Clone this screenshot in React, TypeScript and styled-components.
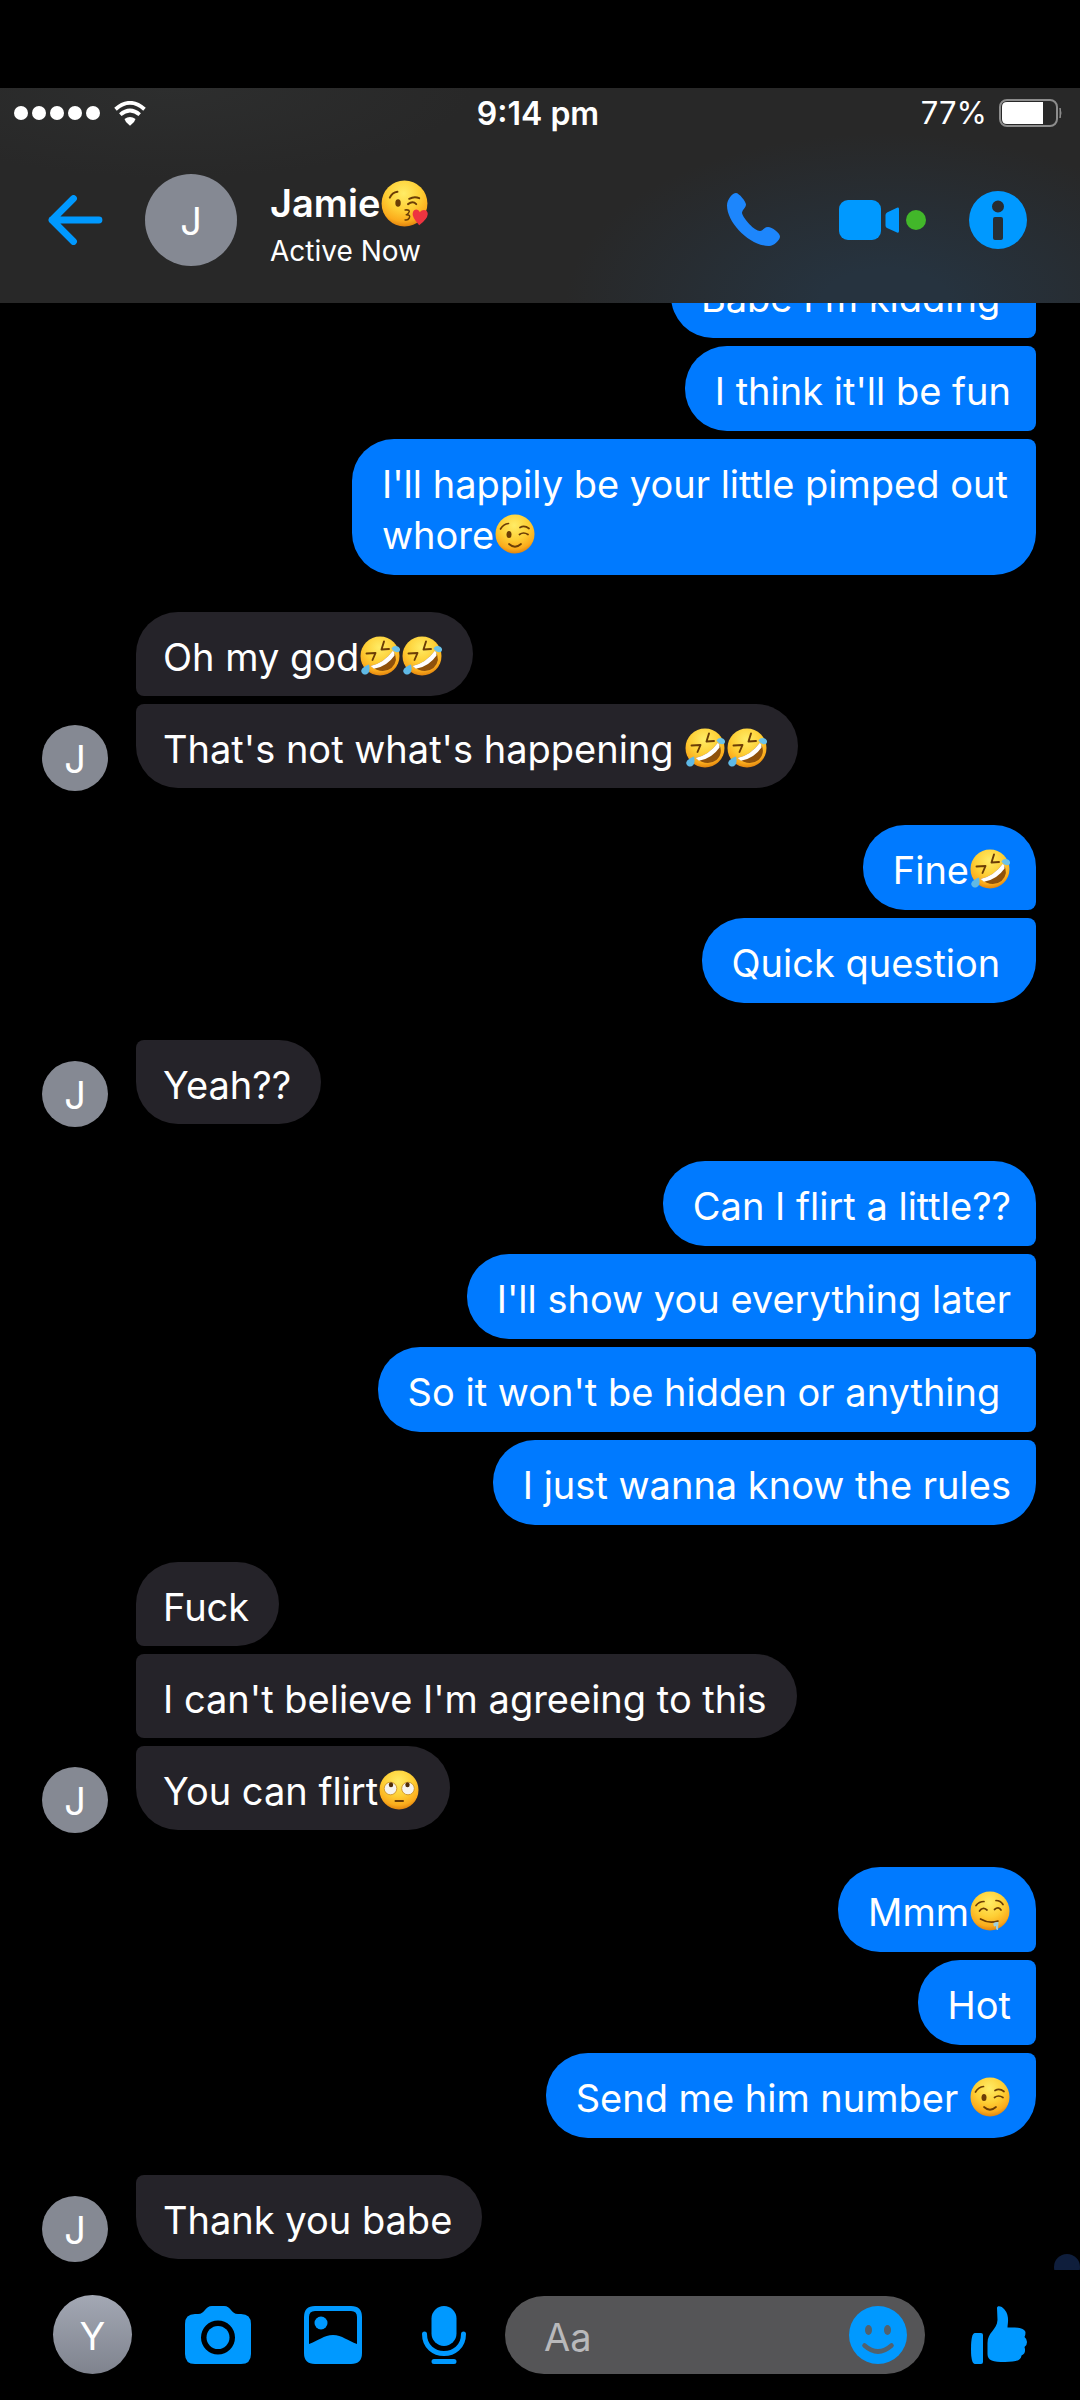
import React from "react";
import styled, { createGlobalStyle } from "styled-components";

const color = {
  accent: "#0099ff",
  sent: "#007aff",
  received: "#252329",
  bar: "#282828",
  avatar: "#858993",
  field: "#555557",
};

const GlobalStyle = createGlobalStyle`
  * { box-sizing: border-box; }
  body {
    margin: 0;
    background: #000;
    color: #fff;
    font-family: Inter, "Liberation Sans", sans-serif;
  }
`;

const Screen = styled.div`
  display: flex;
  flex-direction: column;
  height: 100vh;
  padding-top: 88px;
  background: #000;
`;

const TopBar = styled.header`
  flex: none;
  background:
    radial-gradient(ellipse 320px 170px at 82% 100%, #26333f 0%, #26333f 20%, rgba(40, 40, 40, 0) 100%),
    radial-gradient(ellipse 300px 90px at 16% 0%, #2d2e2e 0%, rgba(40, 40, 40, 0) 100%),
    ${color.bar};
`;

const StatusBar = styled.div`
  display: grid;
  grid-template-columns: 1fr auto 1fr;
  align-items: center;
  height: 50px;
  padding: 0 18px 0 14px;
  line-height: 40px;
`;

const Signal = styled.div`
  display: flex;
  align-items: center;
  gap: 4px;
`;

const SignalDot = styled.span`
  width: 14px;
  height: 14px;
  border-radius: 50%;
  background: #fff;
`;

const WifiIcon = styled.svg`
  margin-left: 10px;
`;

const Clock = styled.time`
  padding-top: 2px;
  font-size: 32px;
  font-weight: 600;
`;

const Power = styled.div`
  display: flex;
  align-items: center;
  justify-content: flex-end;
  gap: 12px;
  font-size: 31px;
`;

const ContactBar = styled.div`
  display: flex;
  align-items: center;
  padding: 30px 53px 32px 48px;
`;

const IconButton = styled.button`
  display: flex;
  flex: none;
  align-items: center;
  justify-content: center;
  padding: 0;
  border: 0;
  background: none;
  color: ${color.accent};
  cursor: pointer;
`;

const InfoButton = styled(IconButton)`
  margin-left: 43px;
`;

const Avatar = styled.span<{ $size: number; $shaded?: boolean }>`
  display: flex;
  flex: none;
  align-items: center;
  justify-content: center;
  width: ${(p) => p.$size}px;
  height: ${(p) => p.$size}px;
  padding-top: 2px;
  border-radius: 50%;
  background: ${(p) => (p.$shaded ? "linear-gradient(#a3a8b4, #7f838e)" : color.avatar)};
  font-size: 38px;
  line-height: 40px;
`;

const Contact = styled.div`
  flex: 1;
  min-width: 0;
  margin-left: 33px;
  padding-top: 11px;
`;

const ContactName = styled.h1`
  display: flex;
  align-items: center;
  height: 48px;
  margin: 0;
  font-size: 38px;
  font-weight: 600;
  white-space: nowrap;
`;

const Presence = styled.p`
  margin: 4px 0 0;
  font-size: 28px;
  line-height: 40px;
`;

const CallActions = styled.div`
  display: flex;
  align-items: center;
  gap: 59px;
`;

const VideoGroup = styled.span`
  display: flex;
  align-items: center;
  gap: 7px;
`;

const OnlineDot = styled.span`
  width: 20px;
  height: 20px;
  border-radius: 50%;
  background: #42b72a;
`;

const Thread = styled.main`
  position: relative;
  display: flex;
  flex: 1;
  min-height: 0;
`;

const Scroller = styled.div`
  display: flex;
  flex: 1;
  flex-direction: column-reverse;
  overflow-y: auto;
  scrollbar-width: none;
  padding: 0 44px 11px 42px;
`;

const Conversation = styled.div`
  display: flex;
  flex: none;
  flex-direction: column;
  gap: 37px;
`;

const ThreadClip = styled.div`
  position: absolute;
  right: 0;
  bottom: 0;
  width: 26px;
  height: 16px;
  overflow: hidden;
`;

const ScrollKnob = styled.div`
  height: 26px;
  border-radius: 50%;
  background: #0f1e3c;
`;

const Turn = styled.section<{ $mine: boolean }>`
  display: flex;
  align-items: flex-end;
  justify-content: ${(p) => (p.$mine ? "flex-end" : "flex-start")};
  gap: 28px;
  padding-left: ${(p) => (p.$mine ? 94 : 0)}px;
`;

const AvatarSlot = styled.div`
  margin-bottom: -3px;
`;

const Stack = styled.div<{ $mine: boolean }>`
  display: flex;
  flex: 1;
  flex-direction: column;
  align-items: ${(p) => (p.$mine ? "flex-end" : "flex-start")};
  gap: 8px;
`;

const Bubble = styled.p<{ $mine: boolean; $first: boolean; $last: boolean }>`
  max-width: 76%;
  margin: 0;
  padding: ${(p) => (p.$mine ? "20px 25px 14px 30px" : "20px 30px 13px 27px")};
  border-radius: ${(p) => {
    const top = p.$first ? 42 : 8;
    const bottom = p.$last ? 42 : 8;
    return p.$mine ? `42px ${top}px ${bottom}px 42px` : `${top}px 42px 42px ${bottom}px`;
  }};
  background: ${(p) => (p.$mine ? color.sent : color.received)};
  font-size: 38px;
  line-height: 51px;
`;

const EmojiSvg = styled.svg<{ $size: number }>`
  width: ${(p) => p.$size}px;
  height: ${(p) => p.$size}px;
  margin: 0 1px;
  vertical-align: -5px;
`;

const Composer = styled.form`
  display: flex;
  flex: none;
  align-items: center;
  gap: 32px;
  padding: 25px 53px 26px;
`;

const Tools = styled.div`
  display: flex;
  align-items: center;
  gap: 53px;
`;

const Field = styled.div`
  display: flex;
  flex: 1;
  align-items: center;
  min-width: 0;
  height: 78px;
  margin-right: 14px;
  padding: 0 18px 0 39px;
  border-radius: 39px;
  background: ${color.field};
`;

const FieldInput = styled.input`
  flex: 1;
  min-width: 0;
  height: 78px;
  padding: 4px 0 0;
  border: 0;
  outline: 0;
  background: none;
  color: #fff;
  font-family: inherit;
  font-size: 38px;

  &::placeholder {
    color: #b9b9bb;
    opacity: 1;
  }
`;

type EmojiKind = "kiss" | "wink" | "rofl" | "roll" | "drool";

const emojiLabel: Record<EmojiKind, string> = {
  kiss: "face blowing a kiss",
  wink: "winking face",
  rofl: "rolling on the floor laughing",
  roll: "face with rolling eyes",
  drool: "drooling face",
};

function EmojiFeatures({ kind }: { kind: EmojiKind }) {
  const line = {
    fill: "none",
    stroke: "#6b3d06",
    strokeWidth: 1.7,
    strokeLinecap: "round" as const,
    strokeLinejoin: "round" as const,
  };
  switch (kind) {
    case "kiss":
      return (
        <>
          <path {...line} d="M7.5 15 Q9.500 10.500 14 10 M24 16 Q28.500 13.500 32.500 15.500 M23 20.500 Q27 17.500 30 20.500" />
          <ellipse cx="14.500" cy="19.500" rx="2.300" ry="3.200" fill="#6b3d06" />
          <path {...line} strokeWidth={1.3} d="M20.500 25.500 Q25.500 25 23.500 28 Q22.500 29.500 21.500 29.500 Q25.500 29.500 24 32.500 Q23 34.500 20.500 34" />
          <path d="M32.500 38.500 Q26 31 27 28 C28 24 32 24.500 33 27.500 C35.500 24 40 25.500 39.800 29 Q39.500 33.500 32.500 38.500Z" fill="#ee3440" />
        </>
      );
    case "wink":
      return (
        <>
          <path {...line} d="M5.500 15 Q8.500 10 13.500 9.500 M25 13.500 Q29.500 11 34 14.500 M24.500 20.500 Q28.500 17.500 33 20.500 M14 30 Q20 35.500 26 30" />
          <ellipse cx="14" cy="20.500" rx="2.500" ry="3.600" fill="#6b3d06" />
        </>
      );
    case "rofl":
      return (
        <>
          <path {...line} strokeWidth={1.9} d="M6.500 17.500 L15.500 17 L12.500 24 M24 5.500 L21.500 13.500 L29 13" />
          <path d="M10.500 30 Q24 27 33 14.500 Q39.500 24 31.500 32 Q22 39 10.500 30Z" fill="#8f520c" />
          <path d="M10.500 30 Q24 27 33 14.500 Q35 17 34.500 19.500 Q27 30.500 14 32.800Z" fill="#fff" />
          <path d="M3 38 C-.5 35.500 1 31.500 9 28.500 C11 36 7.500 40 3 38Z" fill="#5fb9e6" />
          <path d="M31.500 12.500 C33.500 8.500 39 9.500 40 13 C40.500 17 35.500 18 31.500 12.500Z" fill="#6cc3ea" />
        </>
      );
    case "roll":
      return (
        <>
          <circle cx="11.500" cy="18.500" r="6.300" fill="#f6f4ee" stroke="#c98a1b" strokeWidth=".8" />
          <circle cx="29" cy="18.500" r="6.300" fill="#f6f4ee" stroke="#c98a1b" strokeWidth=".8" />
          <ellipse cx="12" cy="14.800" rx="2.200" ry="2.500" fill="#4f2d08" />
          <ellipse cx="28.500" cy="14.800" rx="2.200" ry="2.500" fill="#4f2d08" />
          <path {...line} strokeWidth={2} d="M16.500 31 H24" />
        </>
      );
    case "drool":
      return (
        <>
          <path {...line} d="M6 14.500 Q9 10.500 14 10.500 M26 9.500 Q30.500 9.500 33 13.500 M9.500 20 Q12.500 15.500 17 19 M24.500 18.500 Q28.500 15 31 19 M10.500 28 Q19 33 28 30" />
          <path d="M23.500 32 Q26 30.500 28.500 31 L28 39 Q25.500 39.500 26 35 Q23 36.500 23.500 32Z" fill="#9fd0de" />
        </>
      );
  }
}

function Emoji({ kind, size = 40 }: { kind: EmojiKind; size?: number }) {
  const id = React.useId();
  return (
    <EmojiSvg $size={size} viewBox="0 0 40 40" role="img" aria-label={emojiLabel[kind]}>
      <defs>
        <radialGradient id={id} cx="48%" cy="28%" r="74%">
          <stop offset="0" stopColor="#ffec66" />
          <stop offset=".5" stopColor="#fecf35" />
          <stop offset=".82" stopColor="#fbab1c" />
          <stop offset="1" stopColor="#dd7d0c" />
        </radialGradient>
      </defs>
      <circle cx="20" cy="20" r="19.500" fill={`url(#${id})`} />
      <EmojiFeatures kind={kind} />
    </EmojiSvg>
  );
}

type Part = string | { emoji: EmojiKind };
type TurnData = { mine: boolean; continued?: boolean; messages: Part[][] };

const rofl: Part = { emoji: "rofl" };
const wink: Part = { emoji: "wink" };

const turns: TurnData[] = [
  {
    mine: true,
    continued: true,
    messages: [
      ["Babe I'm kidding\u00a0"],
      ["I think it'll be fun"],
      ["I'll happily be your little pimped out whore", wink],
    ],
  },
  { mine: false, messages: [["Oh my god", rofl, rofl], ["That's not what's happening ", rofl, rofl]] },
  { mine: true, messages: [["Fine", rofl], ["Quick question\u00a0"]] },
  { mine: false, continued: true, messages: [["Yeah??"]] },
  {
    mine: true,
    messages: [
      ["Can I flirt a little??"],
      ["I'll show you everything later"],
      ["So it won't be hidden or anything\u00a0"],
      ["I just wanna know the rules"],
    ],
  },
  {
    mine: false,
    messages: [["Fuck"], ["I can't believe I'm agreeing to this"], ["You can flirt", { emoji: "roll" }]],
  },
  { mine: true, messages: [["Mmm", { emoji: "drool" }], ["Hot"], ["Send me him number ", wink]] },
  { mine: false, continued: true, messages: [["Thank you babe"]] },
];

export default function App() {
  return (
    <Screen>
      <GlobalStyle />
      <TopBar>
        <StatusBar>
          <Signal>
            {[0, 1, 2, 3, 4].map((n) => (
              <SignalDot key={n} />
            ))}
            <WifiIcon width="32" height="25" viewBox="0 0 32 25" aria-hidden="true">
              <path d="M1.500 8.200 Q16 -4.500 30.500 8.200 M6.300 13.600 Q16 5.500 25.700 13.600" fill="none" stroke="#fff" strokeWidth="3.800" />
              <path d="M10.500 18 Q16 14 21.500 18 L20 21 L16 24.800 L12 21Z" fill="#fff" />
            </WifiIcon>
          </Signal>
          <Clock>9:14 pm</Clock>
          <Power>
            <span>77%</span>
            <svg width="63" height="28" viewBox="0 0 63 28" aria-hidden="true">
              <rect x="1" y="1" width="57" height="26" rx="7" fill="none" stroke="#8d8d8d" strokeWidth="2" />
              <path d="M44 3 V25 H8 Q3 25 3 20 V8 Q3 3 8 3Z" fill="#fff" />
              <path d="M61 9 Q63 14 61 19Z" fill="#8d8d8d" stroke="#8d8d8d" />
            </svg>
          </Power>
        </StatusBar>
        <ContactBar>
          <IconButton type="button" aria-label="Back">
            <svg width="97" height="50" viewBox="0 0 97 50">
              <path d="M51 25 H4 M25.500 3.500 L4 25 L25.500 46.500" fill="none" stroke="currentColor" strokeWidth="6.800" strokeLinecap="round" strokeLinejoin="round" />
            </svg>
          </IconButton>
          <Avatar $size={92}>J</Avatar>
          <Contact>
            <ContactName>
              Jamie
              <Emoji kind="kiss" size={47} />
            </ContactName>
            <Presence>Active Now</Presence>
          </Contact>
          <CallActions>
            <IconButton type="button" aria-label="Audio call">
              <svg width="53" height="53" viewBox="0 0 53 53">
                <path d="M9 0C12 0 19 8.500 19 11.500C19 14.500 15 17 15 20C16.500 26 27.500 38 33 38C36 38 37 34 41 34C45 34 53 40 53 43.500C53 47 47 53 42 53C23 53 0 30 0 12.500C0 6.500 5.500 0 9 0Z" fill="#1d86fc" />
              </svg>
            </IconButton>
            <VideoGroup>
              <IconButton type="button" aria-label="Video call">
                <svg width="60" height="40" viewBox="0 0 60 40">
                  <rect width="42" height="40" rx="9" fill="currentColor" />
                  <path d="M46.500 15 Q46.500 13.500 48 12.500 L58 7.700 Q60 7 60 9 V31 Q60 33.500 58 32.500 L48 28 Q46.500 27 46.500 25.500Z" fill="currentColor" />
                </svg>
              </IconButton>
              <OnlineDot />
            </VideoGroup>
          </CallActions>
          <InfoButton type="button" aria-label="Conversation information">
            <svg width="58" height="58" viewBox="0 0 58 58">
              <path
                fillRule="evenodd"
                fill="currentColor"
                d="M29 0A29 29 0 1 1 29 58A29 29 0 1 1 29 0ZM29 9.500A6 6 0 1 0 29 21.500A6 6 0 1 0 29 9.500ZM26 26Q24 26 24 28V47Q24 49 26 49H32Q34 49 34 47V28Q34 26 32 26Z"
              />
            </svg>
          </InfoButton>
        </ContactBar>
      </TopBar>

      <Thread>
        <Scroller>
          <Conversation>
            {turns.map((turn, t) => (
              <Turn key={t} $mine={turn.mine}>
                {!turn.mine && (
                  <AvatarSlot>
                    <Avatar $size={66}>J</Avatar>
                  </AvatarSlot>
                )}
                <Stack $mine={turn.mine}>
                  {turn.messages.map((parts, m) => (
                    <Bubble
                      key={m}
                      $mine={turn.mine}
                      $first={m === 0 && !turn.continued}
                      $last={m === turn.messages.length - 1}
                    >
                      {parts.map((part, i) =>
                        typeof part === "string" ? part : <Emoji key={i} kind={part.emoji} />
                      )}
                    </Bubble>
                  ))}
                </Stack>
              </Turn>
            ))}
          </Conversation>
        </Scroller>
        <ThreadClip>
          <ScrollKnob />
        </ThreadClip>
      </Thread>

      <Composer onSubmit={(e) => e.preventDefault()}>
        <Tools>
          <Avatar $size={79} $shaded>
            Y
          </Avatar>
          <IconButton type="button" aria-label="Camera">
            <svg width="66" height="58" viewBox="0 0 66 58">
              <path
                fillRule="evenodd"
                fill="currentColor"
                d="M10 8H13C20 8 20 0 27 0H39C46 0 46 8 53 8H56Q66 8 66 18V48Q66 58 56 58H10Q0 58 0 48V18Q0 8 10 8ZM33 14.500A17 17 0 1 0 33 48.500A17 17 0 1 0 33 14.500Z"
              />
              <circle cx="33" cy="31.500" r="11.500" fill="currentColor" />
            </svg>
          </IconButton>
          <IconButton type="button" aria-label="Photos">
            <svg width="58" height="58" viewBox="0 0 58 58">
              <path
                fillRule="evenodd"
                fill="currentColor"
                d="M11 0H47Q58 0 58 11V47Q58 58 47 58H11Q0 58 0 47V11Q0 0 11 0ZM11 5Q5 5 5 11V38C14 35 20 29 29 29C38 29 44 35 53 38V11Q53 5 47 5Z"
              />
              <circle cx="17" cy="17" r="6.500" fill="currentColor" />
            </svg>
          </IconButton>
          <IconButton type="button" aria-label="Voice message">
            <svg width="58" height="58" viewBox="0 0 58 58">
              <rect x="16.500" width="25" height="40" rx="12.500" fill="currentColor" />
              <path d="M9.500 28C9.500 54 48.500 54 48.500 28M19 55.500H39" fill="none" stroke="currentColor" strokeWidth="5" strokeLinecap="round" />
            </svg>
          </IconButton>
        </Tools>
        <Field>
          <FieldInput type="text" placeholder="Aa" aria-label="Message" />
          <IconButton type="button" aria-label="Emoji">
            <svg width="58" height="58" viewBox="0 0 58 58">
              <circle cx="29" cy="29" r="29" fill="currentColor" />
              <ellipse cx="19.500" cy="24" rx="3.500" ry="5" fill="#52616d" />
              <ellipse cx="38.500" cy="24" rx="3.500" ry="5" fill="#52616d" />
              <path d="M15.500 39.500Q29 51.500 42.500 39.500" fill="none" stroke="#52616d" strokeWidth="4.600" strokeLinecap="round" />
            </svg>
          </IconButton>
        </Field>
        <IconButton type="submit" aria-label="Send a like">
          <svg width="56" height="58" viewBox="0 0 56 58">
            <path d="M4 27H10Q12 27 12 29V56Q12 58 10 58H4Q0 58 0 43Q0 27 4 27Z" fill="currentColor" />
            <path d="M26 2C26 -1 31 0 33.500 3.500C39 10 36.500 18 36.500 21.500C45 21 54 22 54.500 26.500Q54.500 29.500 53.500 31Q56 33 56 36Q56 39.500 53.500 41Q55.500 47 50.500 49.500C50 55 44 56 34 56C22 56 16.500 54.500 16.500 48V37C16.500 26 26 24 26.500 14Z" fill="currentColor" />
          </svg>
        </IconButton>
      </Composer>
    </Screen>
  );
}
